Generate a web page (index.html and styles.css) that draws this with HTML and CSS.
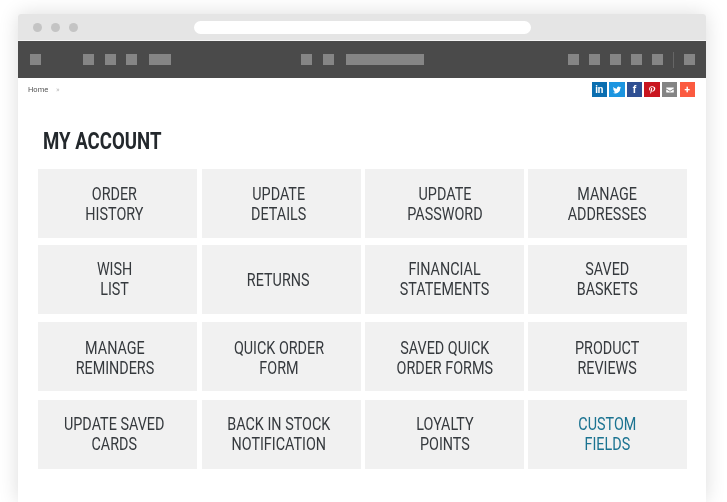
FILE: index.html
```html
<!DOCTYPE html>
<html lang="en">
<head>
<meta charset="UTF-8">
<meta name="viewport" content="width=device-width, initial-scale=1.0">
<title>My Account</title>
<link rel="stylesheet" href="styles.css">
</head>
<body>
<div class="window">
  <div class="titlebar">
    <div class="dots"><span></span><span></span><span></span></div>
    <div class="address"></div>
  </div>
  <div class="navbar">
    <div class="nav-group nav-left">
      <span class="block"></span>
      <span class="block first"></span><span class="block"></span><span class="block"></span><span class="block wide"></span>
    </div>
    <div class="nav-group nav-middle">
      <span class="block"></span><span class="block"></span><span class="block long"></span>
    </div>
    <div class="nav-group nav-right">
      <span class="block"></span><span class="block"></span><span class="block"></span><span class="block"></span><span class="block"></span>
      <span class="divider"></span>
      <span class="block"></span>
    </div>
  </div>
  <div class="crumbs">
    <div class="breadcrumb">Home <span class="sep">&raquo;</span></div>
    <div class="share">
      <a class="linkedin">in</a>
      <a class="twitter">
        <svg viewBox="0 0 24 24"><path d="M22 5.800c-.7.3-1.500.5-2.300.6.800-.5 1.500-1.300 1.800-2.200-.8.500-1.700.8-2.600 1a4.100 4.100 0 0 0-7 3.700C8.500 8.700 5.500 7.100 3.400 4.600c-1.100 1.900-.5 4.300 1.300 5.500-.7 0-1.300-.2-1.900-.5 0 2 1.400 3.700 3.300 4.100-.6.200-1.200.2-1.800.1.500 1.600 2 2.800 3.800 2.800A8.300 8.300 0 0 1 2 18.300 11.700 11.700 0 0 0 20 8c.8-.6 1.500-1.300 2-2.200z"/></svg>
      </a>
      <a class="facebook">f</a>
      <a class="pinterest">
        <svg viewBox="0 0 24 24"><path d="M12.300 3C7.800 3 5 6.100 5 9.500c0 1.900.7 3.500 2.200 4.100.3.100.5 0 .6-.3l.2-.9c.1-.3 0-.4-.1-.7-.5-.5-.7-1.200-.7-2.100 0-2.700 2-5 5.100-5 2.800 0 4.300 1.700 4.300 4 0 3-1.300 5.500-3.300 5.500-1.100 0-1.900-.9-1.600-2 .3-1.300.9-2.700.9-3.700 0-.8-.4-1.500-1.400-1.500-1.100 0-2 1.200-2 2.700 0 1 .3 1.600.3 1.600l-1.300 5.600c-.4 1.600-.1 3.700 0 3.900 0 .1.200.2.300.1.100-.2 1.500-1.900 2-3.700l.8-3c.4.700 1.500 1.400 2.700 1.400 3.500 0 5.900-3.200 5.900-7.500C20 5.800 17 3 12.300 3z"/></svg>
      </a>
      <a class="mail">
        <svg viewBox="0 0 24 24"><path d="M3 6h18v2.500l-9 5-9-5z"/><path d="M3 11l9 5 9-5v7H3z"/></svg>
      </a>
      <a class="more">+</a>
    </div>
  </div>
  <div class="content">
    <h1>MY ACCOUNT</h1>
    <div class="tiles">
      <a class="tile"><span>ORDER<br>HISTORY</span></a>
      <a class="tile"><span>UPDATE<br>DETAILS</span></a>
      <a class="tile"><span>UPDATE<br>PASSWORD</span></a>
      <a class="tile"><span>MANAGE<br>ADDRESSES</span></a>
      <a class="tile"><span>WISH<br>LIST</span></a>
      <a class="tile single"><span>RETURNS</span></a>
      <a class="tile"><span>FINANCIAL<br>STATEMENTS</span></a>
      <a class="tile"><span>SAVED<br>BASKETS</span></a>
      <a class="tile"><span>MANAGE<br>REMINDERS</span></a>
      <a class="tile"><span>QUICK ORDER<br>FORM</span></a>
      <a class="tile"><span>SAVED QUICK<br>ORDER FORMS</span></a>
      <a class="tile"><span>PRODUCT<br>REVIEWS</span></a>
      <a class="tile"><span>UPDATE SAVED<br>CARDS</span></a>
      <a class="tile"><span>BACK IN STOCK<br>NOTIFICATION</span></a>
      <a class="tile"><span>LOYALTY<br>POINTS</span></a>
      <a class="tile custom"><span>CUSTOM<br>FIELDS</span></a>
    </div>
  </div>
</div>
</body>
</html>
```

FILE: styles.css
```css
html, body {
  height: 100%;
}
body {
  margin: 0;
  background: #ffffff;
  font-family: Roboto, "Liberation Sans", sans-serif;
  overflow: hidden;
  padding: 14px 21px 0 18px;
  box-sizing: border-box;
}
.window {
  height: 100%;
  background: #ffffff;
  box-shadow: 0 0 20px rgba(0, 0, 0, 0.14);
  border-radius: 3px 3px 0 0;
  display: flex;
  flex-direction: column;
}

/* browser top */
.titlebar {
  height: 26px;
  background: #e5e5e5;
  border-bottom: 1px solid #f4f4f4;
  display: flex;
  align-items: center;
  border-radius: 3px 3px 0 0;
  padding-left: 15px;
}
.dots {
  display: flex;
  gap: 9px;
  width: 161px;
  filter: blur(0.4px);
}
.dots span {
  width: 9px;
  height: 9px;
  border-radius: 50%;
  background: #c4c4c4;
}
.address {
  width: 337px;
  height: 13px;
  background: #ffffff;
  border-radius: 7px;
  filter: blur(0.3px);
}
.navbar {
  height: 37px;
  background: #4a4a4a;
  display: flex;
  align-items: center;
  padding: 0 11px 0 12px;
}
.nav-group {
  display: flex;
  align-items: center;
  gap: 10.500px;
}
.nav-left {
  width: 271px;
}
.nav-middle {
  flex: 1;
  gap: 11px;
}
.nav-right {
  gap: 10px;
}
.block {
  width: 11px;
  height: 11px;
  background: #858585;
  filter: blur(0.4px);
}
.block.first {
  margin-left: 31.500px;
}
.block.wide {
  width: 22px;
  margin-left: 1px;
}
.block.long {
  width: 78px;
  margin-left: 1px;
}
.divider {
  width: 1px;
  height: 16px;
  background: #666666;
}

/* page */
.crumbs {
  display: flex;
  justify-content: space-between;
  align-items: flex-start;
  padding: 4px 11px 0 10px;
  height: 38px;
  box-sizing: border-box;
}
.breadcrumb {
  font-size: 7.500px;
  color: #555555;
  line-height: 15px;
  filter: blur(0.3px);
}
.sep {
  color: #bbbbbb;
  margin-left: 6px;
}
.share {
  display: flex;
  gap: 2.100px;
}
.share a {
  width: 15.500px;
  height: 15px;
  display: flex;
  align-items: center;
  justify-content: center;
  color: #ffffff;
  font-size: 10px;
  font-weight: 700;
  line-height: 1;
  filter: blur(0.3px);
}
.share svg {
  width: 10px;
  height: 10px;
  fill: #ffffff;
}
.linkedin { background: #0a6eb0; }
.twitter { background: #1c95e0; }
.facebook { background: #2f4f92; }
.pinterest { background: #c9151f; }
.mail { background: #848484; }
.more { background: #fb5a40; }

.content {
  flex: 1;
  padding: 0 19px 0 20px;
}
h1 {
  margin: 0 0 0 5px;
  height: 53px;
  font-size: 23px;
  line-height: 51px;
  font-weight: 700;
  color: #23282c;
  transform: scaleX(0.81);
  transform-origin: left center;
  white-space: nowrap;
}
.tiles {
  display: grid;
  grid-template-columns: 164px 163px 163px 159px;
  grid-template-rows: 76px 77px 78px 69px;
}
.tile {
  width: 159px;
  height: 69px;
  box-sizing: border-box;
  background: #f1f1f1;
  display: flex;
  align-items: center;
  justify-content: center;
  text-align: center;
  font-size: 17.500px;
  line-height: 20px;
  font-weight: 400;
  color: #363a3e;
  white-space: nowrap;
}
.tile span {
  display: block;
  transform: scaleX(0.82);
}
/* first two columns sit a little left of centre */
.tile:nth-child(4n+1),
.tile:nth-child(4n+2) {
  padding-right: 6px;
}
/* per row nudge */
.tile:nth-child(n+5):nth-child(-n+8),
.tile:nth-child(n+13) {
  padding-bottom: 2px;
}
.tile:nth-child(n+9):nth-child(-n+12) {
  padding-top: 2px;
}
.tile.single {
  padding-bottom: 0;
  padding-top: 2px;
}
.tile.custom {
  color: #1b7391;
}
```
